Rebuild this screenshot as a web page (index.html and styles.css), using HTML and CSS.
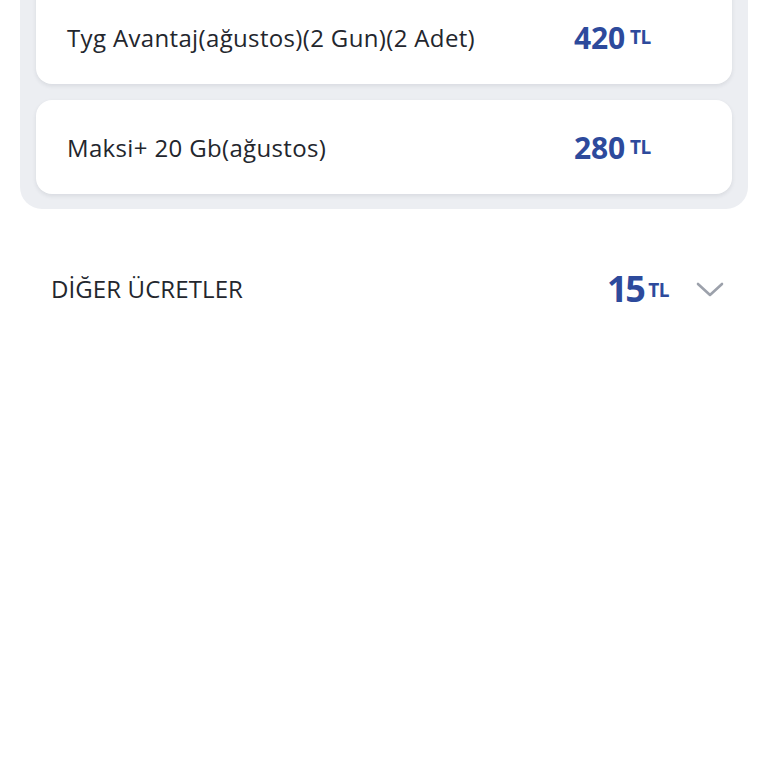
FILE: index.html
```html
<!DOCTYPE html>
<html lang="tr">
<head>
<meta charset="utf-8">
<link rel="stylesheet" href="styles.css">
</head>
<body>
<div class="page">
  <div class="group">
    <div class="card card-first">
      <span class="name">Tyg Avantaj(ağustos)(2 Gun)(2 Adet)</span>
      <span class="price"><span class="amount">420</span><span class="cur">TL</span></span>
    </div>
    <div class="card">
      <span class="name">Maksi+ 20 Gb(ağustos)</span>
      <span class="price"><span class="amount">280</span><span class="cur">TL</span></span>
    </div>
  </div>
  <div class="other">
    <span class="other-label">DİĞER ÜCRETLER</span>
    <span class="other-right">
      <span class="price"><span class="amount big">15</span><span class="cur">TL</span></span>
      <svg class="chev" width="28" height="16" viewBox="0 0 28 16"><path d="M2 3 L14 14 L26 3" fill="none" stroke="#9ca1ab" stroke-width="2.6" stroke-linecap="round" stroke-linejoin="round"/></svg>
    </span>
  </div>
</div>
</body>
</html>
```
FILE: styles.css
```css
* { box-sizing: border-box; }
html, body { margin: 0; padding: 0; background: #fff; }
body { font-family: "Open Sans", "Noto Sans", sans-serif; color: #23262d; }
.page { width: 768px; height: 768px; overflow: hidden; position: relative; }
.group {
  margin: -30px 20px 0 20px;
  background: #eceef2;
  border-radius: 0 0 22px 22px;
  padding: 0 16px 15px 16px;
  display: flex;
  flex-direction: column;
  gap: 16px;
}
.card {
  background: #fff;
  border-radius: 16px;
  height: 94px;
  display: flex;
  align-items: center;
  padding: 0 0 0 31px;
  box-shadow: 0 2px 4px rgba(40, 50, 70, 0.10);
}
.card-first { height: 114px; padding-top: 20px; }
.name { font-size: 24px; flex: 0 0 507px; letter-spacing: 0.35px; }
.price { display: inline-flex; align-items: baseline; color: #2d4a9c; font-weight: 700; }
.amount { font-size: 30px; letter-spacing: -0.2px; }
.amount.big { font-size: 36px; letter-spacing: -2.5px; }
.cur { font-size: 19px; margin-left: 5px; position: relative; top: -5px; letter-spacing: -0.5px; }
.other {
  display: flex;
  align-items: center;
  justify-content: space-between;
  padding: 0 44px 0 51px;
  margin-top: 55px;
}
.other-label { font-size: 24px; letter-spacing: 0.1px; }
.other-right { display: inline-flex; align-items: center; gap: 27px; }
.chev { display: block; }
```
